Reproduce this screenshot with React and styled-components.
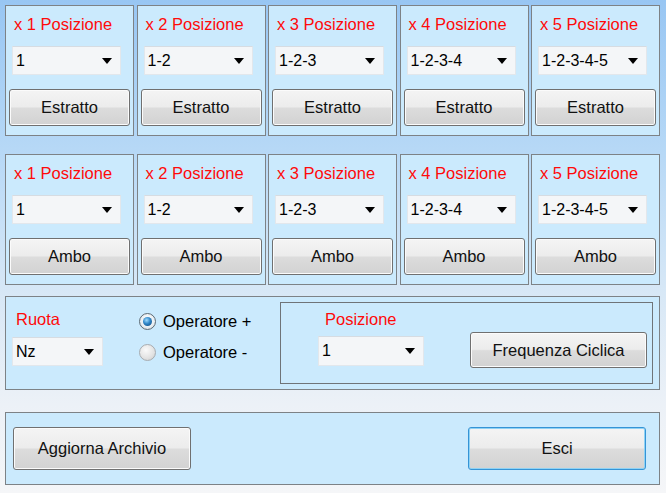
import React from "react";
import styled, { createGlobalStyle } from "styled-components";

const GlobalStyle = createGlobalStyle`
  html, body {
    margin: 0;
    padding: 0;
  }
  body {
    font-family: "Liberation Sans", Arial, sans-serif;
  }
`;

const positions = [
  { label: "x 1 Posizione", value: "1" },
  { label: "x 2 Posizione", value: "1-2" },
  { label: "x 3 Posizione", value: "1-2-3" },
  { label: "x 4 Posizione", value: "1-2-3-4" },
  { label: "x 5 Posizione", value: "1-2-3-4-5" },
];

const Arrow = () => (
  <svg width="10" height="6" viewBox="0 0 10 6">
    <polygon points="0,0 10,0 5,6" fill="#000" />
  </svg>
);

const ComboBox = ({ value, width }) => (
  <Combo $width={width}>
    <span>{value}</span>
    <Arrow />
  </Combo>
);

const Radio = ({ checked, children }) => (
  <RadioRow>
    <RadioCircle $checked={checked}>{checked && <RadioDot />}</RadioCircle>
    <span>{children}</span>
  </RadioRow>
);

export default function App() {
  return (
    <Window>
      <GlobalStyle />
      <Grid>
        {positions.map((p) => (
          <Panel key={"e" + p.label}>
            <Label>{p.label}</Label>
            <ComboBox value={p.value} />
            <Button>Estratto</Button>
          </Panel>
        ))}
      </Grid>

      <Grid $top={18}>
        {positions.map((p) => (
          <Panel key={"a" + p.label}>
            <Label>{p.label}</Label>
            <ComboBox value={p.value} />
            <Button>Ambo</Button>
          </Panel>
        ))}
      </Grid>

      <WidePanel $top={11} $height={94}>
        <RuotaColumn>
          <Label $indent={7}>Ruota</Label>
          <ComboBox value="Nz" width={91} />
        </RuotaColumn>
        <RadioColumn>
          <Radio checked>Operatore +</Radio>
          <Radio>Operatore -</Radio>
        </RadioColumn>
        <GroupBox>
          <GroupColumn>
            <Label $indent={10}>Posizione</Label>
            <ComboBox value="1" width={106} />
          </GroupColumn>
          <Button $wide>Frequenza Ciclica</Button>
        </GroupBox>
      </WidePanel>

      <FooterPanel $top={22} $height={73}>
        <Button $footer>Aggiorna Archivio</Button>
        <Button $footer $primary>
          Esci
        </Button>
      </FooterPanel>
    </Window>
  );
}

const Window = styled.div`
  width: 666px;
  height: 493px;
  box-sizing: border-box;
  padding: 5px;
  overflow: hidden;
  background: linear-gradient(
    180deg,
    #98c6f3 0%,
    #b6d8f6 30%,
    #d8e8f6 60%,
    #ecf1f7 82%,
    #f5f6f8 100%
  );
  font-family: "Liberation Sans", Arial, sans-serif;
  font-size: 16px;
  color: #000;
`;

const Grid = styled.div`
  display: grid;
  grid-template-columns: repeat(5, 129px);
  column-gap: 2.5px;
  margin-top: ${(p) => p.$top || 0}px;
`;

const Panel = styled.div`
  box-sizing: border-box;
  height: 131px;
  background: #cbeafd;
  border: 1px solid #7d8286;
  padding: 9px 3px 0;
  display: flex;
  flex-direction: column;
  align-items: flex-start;
`;

const Label = styled.div`
  color: #ff0a0a;
  font-size: 16.5px;
  line-height: 18px;
  padding-left: ${(p) => (p.$indent != null ? p.$indent : 5)}px;
  white-space: nowrap;
`;

const Combo = styled.div`
  box-sizing: border-box;
  width: ${(p) => (p.$width ? p.$width + "px" : "calc(100% - 12px)")};
  height: 29px;
  margin: 13px 0 0 3px;
  padding: 0 8px 0 3px;
  background: #f4f6f8;
  border: 1px solid #e2e7ec;
  border-top-color: #d6dce2;
  display: flex;
  align-items: center;
  justify-content: space-between;
  font-size: 16px;
  white-space: nowrap;
`;

const Button = styled.div`
  box-sizing: border-box;
  width: ${(p) => (p.$wide || p.$footer ? "178px" : "100%")};
  height: ${(p) => (p.$footer ? 43 : p.$wide ? 36 : 37)}px;
  margin-top: ${(p) => (p.$wide || p.$footer ? 0 : 14)}px;
  border: 1px solid ${(p) => (p.$primary ? "#3594d6" : "#707070")};
  border-radius: 3px;
  box-shadow: ${(p) =>
    p.$primary ? "inset 0 0 0 1px #8fd2f4" : "inset 0 0 0 1px #fbfbfb"};
  background: linear-gradient(
    180deg,
    #f4f4f4 0%,
    #ececec 48%,
    #dcdcdc 52%,
    #d2d2d2 100%
  );
  display: flex;
  align-items: center;
  justify-content: center;
  font-size: 16.5px;
  color: #111;
  white-space: nowrap;
`;

const WidePanel = styled.div`
  box-sizing: border-box;
  width: 655px;
  height: ${(p) => p.$height}px;
  margin-top: ${(p) => p.$top}px;
  background: #cbeafd;
  border: 1px solid #7d8286;
  display: flex;
  align-items: flex-start;
`;

const FooterPanel = styled(WidePanel)`
  align-items: center;
  justify-content: space-between;
  padding: 0 13px 0 7px;
`;

const RuotaColumn = styled.div`
  display: flex;
  flex-direction: column;
  padding: 13px 0 0 3px;
  ${Combo} {
    margin-top: 9px;
  }
`;

const RadioColumn = styled.div`
  display: flex;
  flex-direction: column;
  gap: 13px;
  margin: 15px 0 0 36px;
  width: 134px;
`;

const RadioRow = styled.div`
  display: flex;
  align-items: center;
  gap: 7px;
  height: 18px;
  font-size: 16.5px;
  white-space: nowrap;
`;

const RadioCircle = styled.div`
  box-sizing: border-box;
  width: 17px;
  height: 17px;
  border-radius: 50%;
  border: 1px solid ${(p) => (p.$checked ? "#5d6a74" : "#a8acb0")};
  background: ${(p) =>
    p.$checked
      ? "radial-gradient(circle at 50% 40%, #ffffff 0%, #e8eef2 60%, #c8d0d6 100%)"
      : "radial-gradient(circle at 40% 35%, #fafafa 0%, #e2e2e2 60%, #c9c9c9 100%)"};
  display: flex;
  align-items: center;
  justify-content: center;
`;

const RadioDot = styled.div`
  width: 9px;
  height: 9px;
  border-radius: 50%;
  background: radial-gradient(
    circle at 40% 35%,
    #9fdcff 0%,
    #2f86c8 45%,
    #0b3f72 100%
  );
`;

const GroupBox = styled.div`
  box-sizing: border-box;
  width: 373px;
  height: 82px;
  margin: 5px 6px 0 auto;
  border: 1px solid #6f7478;
  display: flex;
  align-items: flex-start;
  padding: 0 5px 0 0;
  justify-content: space-between;

  ${Button} {
    margin-top: 29px;
    width: 177px;
  }
`;

const GroupColumn = styled.div`
  display: flex;
  flex-direction: column;
  padding: 7px 0 0 34px;
  ${Combo} {
    margin-top: 8px;
    height: 30px;
  }
`;
